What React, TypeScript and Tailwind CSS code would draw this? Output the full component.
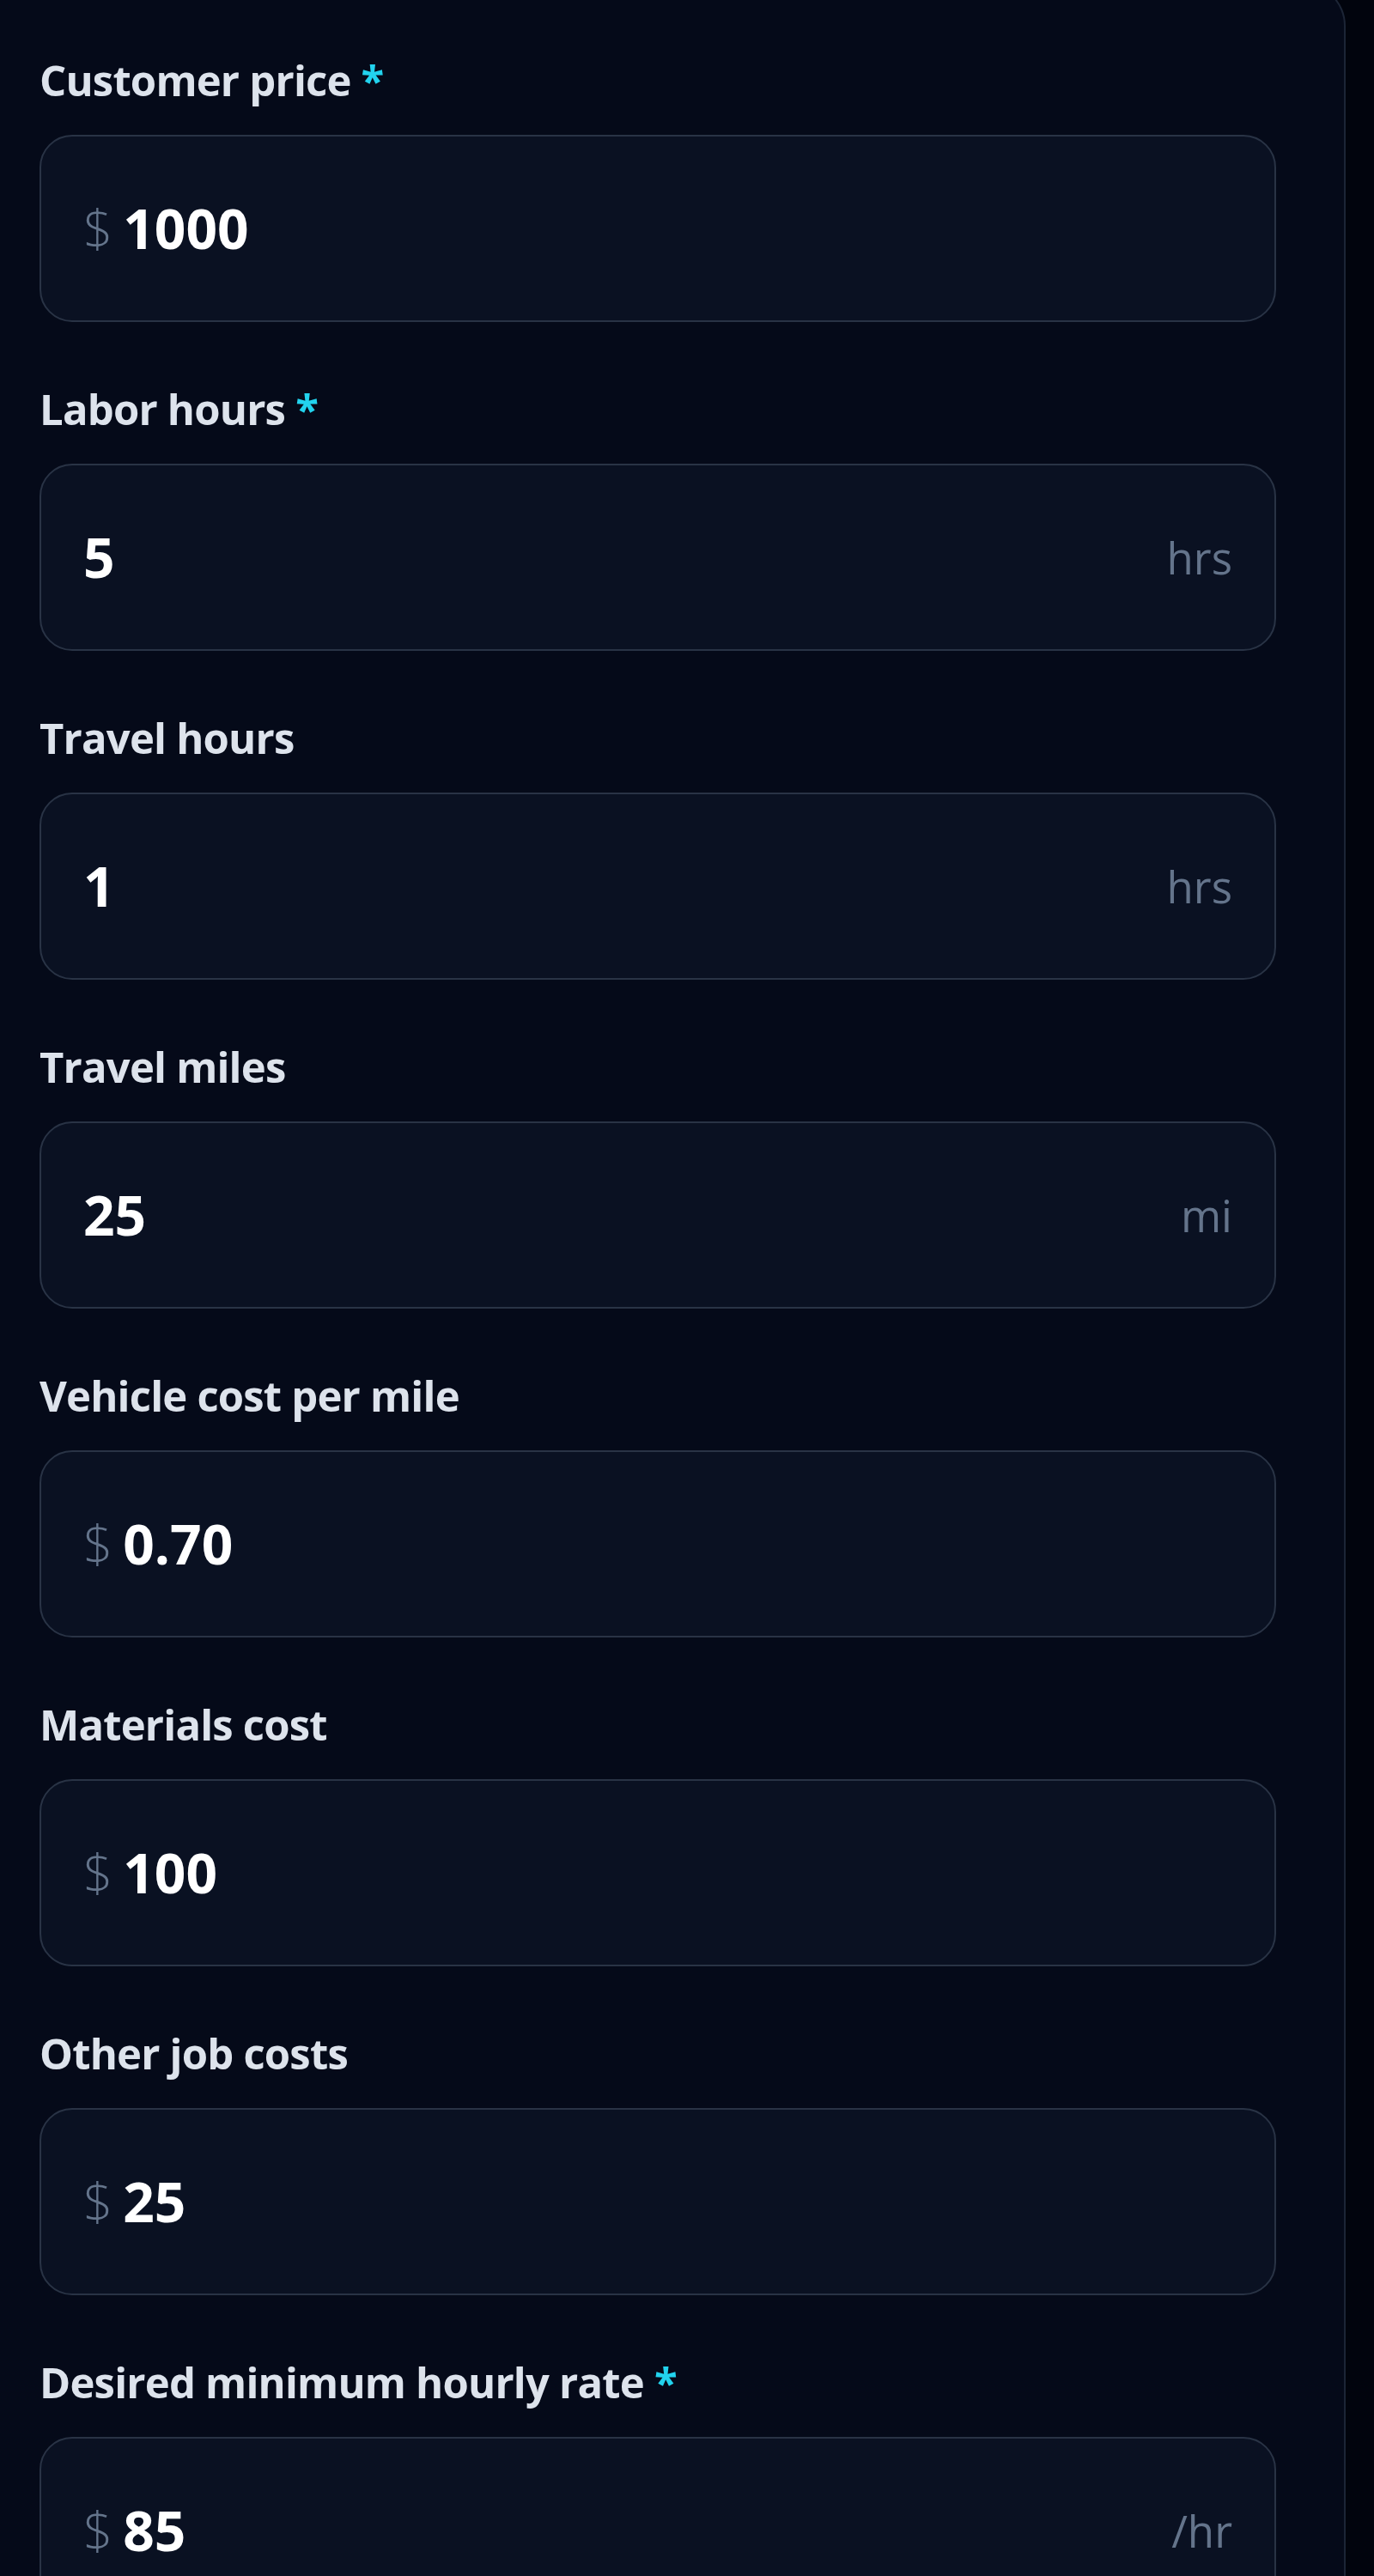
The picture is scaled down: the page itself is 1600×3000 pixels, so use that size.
import type { ReactNode } from 'react'

type Field = {
  label: string
  value: string
  required?: boolean
  prefix?: string
  suffix?: string
}

const FIELDS: Field[] = [
  { label: 'Customer price', value: '1000', required: true, prefix: '$' },
  { label: 'Labor hours', value: '5', required: true, suffix: 'hrs' },
  { label: 'Travel hours', value: '1', suffix: 'hrs' },
  { label: 'Travel miles', value: '25', suffix: 'mi' },
  { label: 'Vehicle cost per mile', value: '0.70', prefix: '$' },
  { label: 'Materials cost', value: '100', prefix: '$' },
  { label: 'Other job costs', value: '25', prefix: '$' },
  { label: 'Desired minimum hourly rate', value: '85', required: true, prefix: '$', suffix: '/hr' },
]

function Label({ children, required }: { children: ReactNode; required?: boolean }) {
  return (
    <div className="h-[64px] text-[49px] leading-[64px] font-bold tracking-[-0.8px] text-[#dde3ec]">
      {children}
      {required && <span className="ml-[12px] text-[#22d3ee]">*</span>}
    </div>
  )
}

function NumberField({ f }: { f: Field }) {
  return (
    <div className="flex flex-col">
      <Label required={f.required}>{f.label}</Label>
      <div className="mt-[32px] flex h-[218px] w-[1440px] items-center rounded-[38px] border-2 border-[#293345] bg-[#0a1122] px-[49px]">
        {f.prefix && <span className="mr-[12px] text-[60px] font-light leading-none text-[#64748b]">{f.prefix}</span>}
        <span className="text-[64px] font-bold text-white">{f.value}</span>
        <span className="flex-1" />
        {f.suffix && <span className="text-[51px] text-[#64748b]">{f.suffix}</span>}
      </div>
    </div>
  )
}

export default function App() {
  return (
    <div className="h-[3000px] overflow-hidden bg-[#01040d]" style={{ fontFamily: '"Open Sans", "Noto Sans", sans-serif' }}>
      <div className="-mt-[20px] h-[3100px] w-[1567px] rounded-tr-[50px] border-t-2 border-r-2 border-[#1c2536] bg-[#050a19] pt-[79px] pl-[46px]">
        <div className="flex flex-col gap-[69px]">
          {FIELDS.map((f) => <NumberField key={f.label} f={f} />)}
        </div>
      </div>
    </div>
  )
}
